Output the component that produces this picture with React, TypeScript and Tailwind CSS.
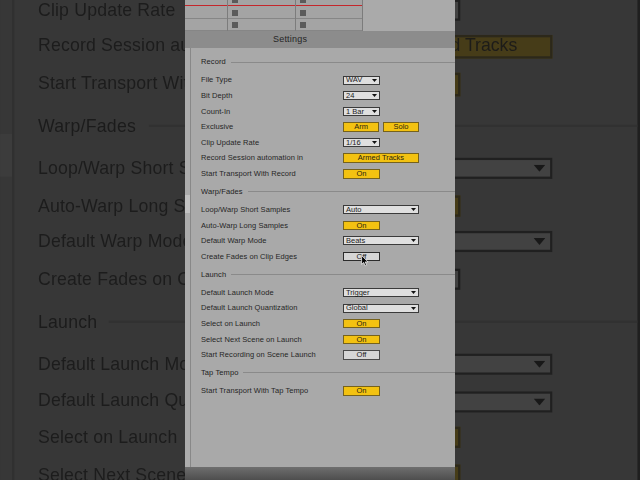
import React from "react"

type Row =
  | { label: string; kind: "select"; value: string; wide?: boolean }
  | { label: string; kind: "toggle"; value: "On" | "Off"; pressed?: boolean }
  | { label: string; kind: "pair"; values: string[] }
  | { label: string; kind: "button"; value: string }

interface Section {
  title: string
  rows: Row[]
}

const sections: Section[] = [
  {
    title: "Record",
    rows: [
      { label: "File Type", kind: "select", value: "WAV" },
      { label: "Bit Depth", kind: "select", value: "24" },
      { label: "Count-In", kind: "select", value: "1 Bar" },
      { label: "Exclusive", kind: "pair", values: ["Arm", "Solo"] },
      { label: "Clip Update Rate", kind: "select", value: "1/16" },
      { label: "Record Session automation in", kind: "button", value: "Armed Tracks" },
      { label: "Start Transport With Record", kind: "toggle", value: "On" },
    ],
  },
  {
    title: "Warp/Fades",
    rows: [
      { label: "Loop/Warp Short Samples", kind: "select", value: "Auto", wide: true },
      { label: "Auto-Warp Long Samples", kind: "toggle", value: "On" },
      { label: "Default Warp Mode", kind: "select", value: "Beats", wide: true },
      { label: "Create Fades on Clip Edges", kind: "toggle", value: "Off", pressed: true },
    ],
  },
  {
    title: "Launch",
    rows: [
      { label: "Default Launch Mode", kind: "select", value: "Trigger", wide: true },
      { label: "Default Launch Quantization", kind: "select", value: "Global", wide: true },
      { label: "Select on Launch", kind: "toggle", value: "On" },
      { label: "Select Next Scene on Launch", kind: "toggle", value: "On" },
      { label: "Start Recording on Scene Launch", kind: "toggle", value: "Off" },
    ],
  },
  {
    title: "Tap Tempo",
    rows: [{ label: "Start Transport With Tap Tempo", kind: "toggle", value: "On" }],
  },
]

function Arrow() {
  return (
    <svg width="5" height="3" viewBox="0 0 5 3" className="shrink-0">
      <polygon points="0,0 5,0 2.5,3" fill="#111" />
    </svg>
  )
}

function Select({ value, wide }: { value: string; wide?: boolean }) {
  return (
    <div
      className={`${wide ? "w-[76px]" : "w-[37px]"} h-[9px] bg-[#dfdfdf] border border-[#3a3a3a] flex items-center justify-between pl-[2px] pr-[2px]`}
    >
      <span className="text-[7.5px] leading-none text-[#1c1c1c]">{value}</span>
      <Arrow />
    </div>
  )
}

function YellowButton({ label, width }: { label: string; width: string }) {
  return (
    <div
      className={`${width} h-[9.5px] bg-[#f3c211] border border-[#76621c] flex items-center justify-center text-[7.5px] leading-none text-[#2a2410]`}
    >
      {label}
    </div>
  )
}

function Toggle({ value, pressed }: { value: "On" | "Off"; pressed?: boolean }) {
  if (value === "On") return <YellowButton label="On" width="w-[37px]" />
  return (
    <div
      className={`w-[37px] h-[9.5px] bg-[#d6d6d6] border ${pressed ? "border-[#2c2c2c]" : "border-[#4a4a4a]"} flex items-center justify-center text-[7.5px] leading-none text-[#222]`}
    >
      Off
    </div>
  )
}

function Control({ row }: { row: Row }) {
  switch (row.kind) {
    case "select":
      return <Select value={row.value} wide={row.wide} />
    case "toggle":
      return <Toggle value={row.value} pressed={row.pressed} />
    case "pair":
      return (
        <div className="flex gap-[4px]">
          {row.values.map((v) => (
            <YellowButton key={v} label={v} width="w-[36px]" />
          ))}
        </div>
      )
    case "button":
      return <YellowButton label={row.value} width="w-[76px]" />
  }
}

function TrackGrid() {
  const columns = [
    { w: "w-[42px]", squares: false, line: false },
    { w: "w-[68px]", squares: true, line: true },
    { w: "w-[67px]", squares: true, line: true },
  ]
  return (
    <div className="flex h-[31px] bg-[#a4a4a4]">
      {columns.map((c, i) => (
        <div key={i} className={`${c.w} flex flex-col ${c.line ? "border-l border-[#7c7c7c]" : ""}`}>
          <div className="h-[5.5px] border-b-[1.5px] border-[#c4262b]">
            {c.squares && <div className="ml-[4px] w-[6px] h-[2.5px] bg-[#5b5b5b]" />}
          </div>
          <div className="h-[13px] border-b border-[#868686]">
            {c.squares && <div className="ml-[4px] mt-[4.5px] w-[6px] h-[5.5px] bg-[#5b5b5b]" />}
          </div>
          <div className="h-[12px] border-b border-[#868686]">
            {c.squares && <div className="ml-[4px] mt-[3.5px] w-[6px] h-[5.5px] bg-[#5b5b5b]" />}
          </div>
        </div>
      ))}
      <div className="flex-1 border-l border-[#7c7c7c] bg-[#aaaaaa]" />
    </div>
  )
}

function SettingsWindow() {
  return (
    <div className="w-[270px] flex flex-col">
      <TrackGrid />
      <div className="h-[17px] bg-[#8c8c8c] flex items-center pl-[88px] text-[9px] leading-none text-[#262626] tracking-[0.2px]">
        Settings
      </div>
      <div className="h-[419px] flex bg-[#a9a9a9]">
        <div className="w-[5px] bg-[#acacac] flex flex-col pt-[147px]">
          <div className="h-[18px] bg-[#c2c2c2]" />
        </div>
        <div className="flex-1 border-l border-[#888888] pl-[10px] pt-[4px] flex flex-col">
          {sections.map((s) => (
            <div key={s.title} className="flex flex-col">
              <div className="h-[20.4px] flex items-center">
                <span className="text-[7.5px] leading-none text-[#1e1e1e] tracking-[0.1px]">{s.title}</span>
                <div className="flex-1 ml-[5px] border-t border-[#8a8a8a]" />
              </div>
              {s.rows.map((r) => (
                <div key={r.label} className="h-[15.6px] flex items-center">
                  <span className="w-[142px] text-[7.5px] leading-none text-[#262626] tracking-[0.07px] whitespace-nowrap">
                    {r.label}
                  </span>
                  <Control row={r} />
                </div>
              ))}
            </div>
          ))}
        </div>
      </div>
      <div className="h-[13px] bg-gradient-to-b from-[#6e6e6e] to-[#4e4e4e]" />
    </div>
  )
}

function Cursor() {
  return (
    <svg width="8" height="12" viewBox="0 0 8 12" className="absolute left-[361px] top-[255px]">
      <path
        d="M0.6 0.6 L0.6 9.4 L2.7 7.4 L4.2 10.8 L5.6 10.2 L4.2 6.9 L7 6.9 Z"
        fill="#000"
        stroke="#fff"
        strokeWidth="0.7"
      />
    </svg>
  )
}

export default function App() {
  return (
    <div className="relative w-[640px] h-[480px] overflow-hidden bg-[#363636] font-['Liberation_Sans',Arial,sans-serif]">
      {/* zoomed-in copy behind the window */}
      <div className="absolute inset-0 overflow-hidden">
        <div className="w-[640px] h-[480px] pl-[185px] origin-top-left [transform:translate(-436.4px,-326.1px)_scale(2.36)] blur-[0.3px]">
          <SettingsWindow />
        </div>
        <div className="absolute inset-0 bg-[#1a1a1a]/80" />
      </div>

      <div className="relative pl-[185px]">
        <SettingsWindow />
        <Cursor />
      </div>
    </div>
  )
}
